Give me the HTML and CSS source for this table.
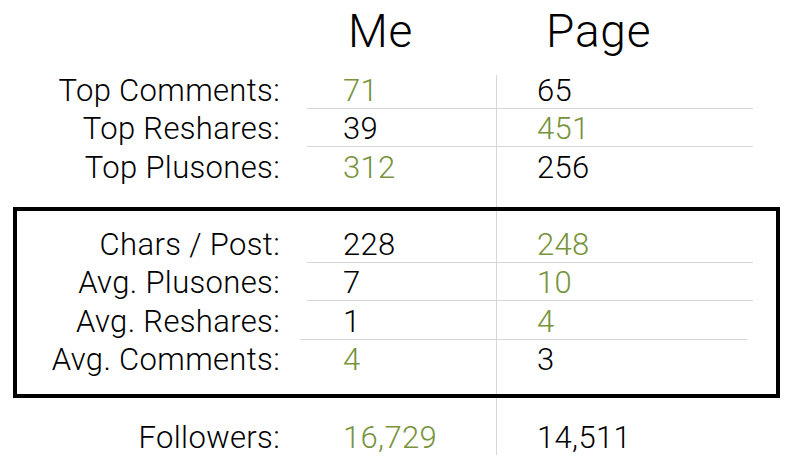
FILE: index.html
```html
<!DOCTYPE html>
<html lang="en">
<head>
<meta charset="utf-8">
<title>Me vs Page</title>
<link rel="stylesheet" href="styles.css">
</head>
<body>
<main class="stats">
  <div class="row head">
    <div class="label"></div>
    <div class="vals">
      <div class="me">Me</div>
      <div class="page">Page</div>
    </div>
  </div>

  <section class="group">
    <div class="row">
      <div class="label">Top Comments:</div>
      <div class="vals line"><div class="me win">71</div><div class="page">65</div></div>
    </div>
    <div class="row">
      <div class="label">Top Reshares:</div>
      <div class="vals line"><div class="me">39</div><div class="page win">451</div></div>
    </div>
    <div class="row">
      <div class="label">Top Plusones:</div>
      <div class="vals"><div class="me win">312</div><div class="page">256</div></div>
    </div>
  </section>

  <section class="group boxed">
    <div class="row">
      <div class="label">Chars / Post:</div>
      <div class="vals line"><div class="me">228</div><div class="page win">248</div></div>
    </div>
    <div class="row">
      <div class="label">Avg. Plusones:</div>
      <div class="vals line"><div class="me">7</div><div class="page win">10</div></div>
    </div>
    <div class="row">
      <div class="label">Avg. Reshares:</div>
      <div class="vals line shift"><div class="me">1</div><div class="page win">4</div></div>
    </div>
    <div class="row">
      <div class="label">Avg. Comments:</div>
      <div class="vals"><div class="me win">4</div><div class="page">3</div></div>
    </div>
  </section>

  <section class="group followers">
    <div class="row">
      <div class="label">Followers:</div>
      <div class="vals"><div class="me win">16,729</div><div class="page">14,511</div></div>
    </div>
  </section>
</main>
</body>
</html>
```

FILE: styles.css
```css
* { box-sizing: border-box; }

html, body {
  margin: 0;
  padding: 0;
  background: #ffffff;
}

body {
  font-family: Roboto, "Liberation Sans", sans-serif;
  font-weight: 300;
  color: #000000;
  width: 793px;
  height: 468px;
  overflow: hidden;
}

.stats {
  --label-w: 280px;
  --gap-l: 27px;
  --me-w: 190px;
  height: 468px;
  background-image: linear-gradient(#d6d6d6, #d6d6d6);
  background-repeat: no-repeat;
  background-size: 1px 380px;
  background-position: 496px 75px;
}

.row {
  display: grid;
  grid-template-columns: var(--label-w) 1fr;
  height: 38.5px;
  font-size: 31px;
  line-height: 35px;
  letter-spacing: 0.35px;
  padding-top: 3.5px;
}

.label {
  text-align: right;
  white-space: nowrap;
}

.vals {
  display: grid;
  grid-template-columns: var(--me-w) 1fr;
  margin-left: var(--gap-l);
  width: 446px;
  height: 100%;
}

.vals.line {
  border-bottom: 1px solid #d6d6d6;
}

.vals.shift {
  margin-left: calc(var(--gap-l) - 7px);
  grid-template-columns: calc(var(--me-w) + 7px) 1fr;
  width: 447px;
}

.me { padding-left: 36px; }
.page { padding-left: 40px; }
.vals.shift .me { padding-left: 43px; }

.win { color: #77933c; }

.row.head {
  height: 69px;
  font-size: 46px;
  line-height: 54px;
  letter-spacing: 0.8px;
  padding-top: 4px;
}

.row.head .me { padding-left: 41px; }
.row.head .page { padding-left: 49px; }

.group.boxed {
  --label-w: 263px;
  margin: 22px 13px 0 13px;
  width: 767px;
  height: 191px;
  border: 4px solid #000000;
  padding-top: 12.8px;
}

.group.followers {
  margin-top: 19px;
}
```
